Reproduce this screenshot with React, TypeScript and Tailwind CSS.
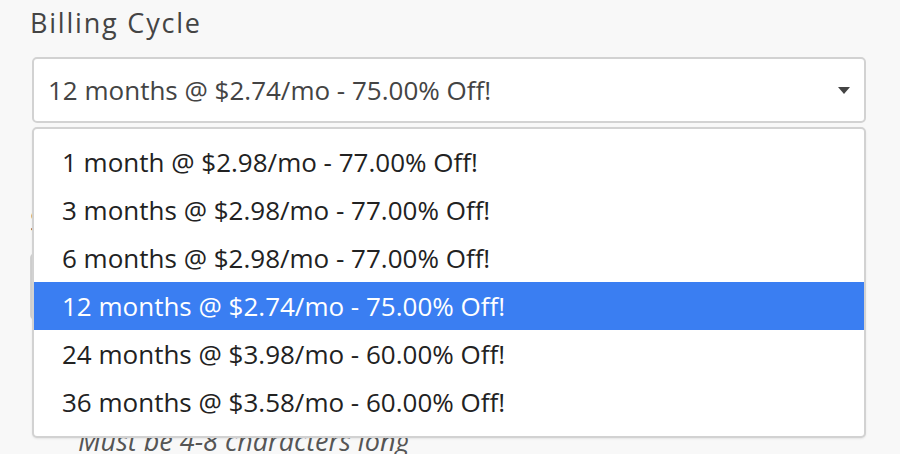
const options = [
  "1 month @ $2.98/mo - 77.00% Off!",
  "3 months @ $2.98/mo - 77.00% Off!",
  "6 months @ $2.98/mo - 77.00% Off!",
  "12 months @ $2.74/mo - 75.00% Off!",
  "24 months @ $3.98/mo - 60.00% Off!",
  "36 months @ $3.58/mo - 60.00% Off!",
];

export default function App() {
  const selected = 3;

  return (
    <div
      className="relative w-full h-[454px] overflow-hidden bg-[#f8f8f8]"
      style={{ fontFamily: "'Open Sans', 'Noto Sans', sans-serif" }}
    >
      {/* form underneath */}
      <div className="pl-[30px] pr-[34px] pt-[7px]">
        <div className="text-[27px] leading-[32px] tracking-[1.8px] text-[#444]">Billing Cycle</div>

        <div className="mt-[18px] ml-[2px] h-[66px] flex items-center justify-between rounded-[5px] border-2 border-[#d2d2d2] bg-white pl-[14px] pr-[14px]">
          <span className="text-[26px] leading-[32px] text-[#444]">12 months @ $2.74/mo - 75.00% Off!</span>
          <svg width="12" height="7" viewBox="0 0 12 7">
            <path d="M0 0h12L6 7z" fill="#444" />
          </svg>
        </div>

        <div className="mt-[82px] text-[27px] leading-[32px] tracking-[1.8px] text-[#444]">Server Hostname</div>
        <div className="mt-[16px] h-[67px] rounded-[5px] border-2 border-[#d2d2d2] bg-white" />
        <div className="mt-[105px] pl-[48px] text-[27px] leading-[32px] italic text-[#555]">
          Must be 4-8 characters long
        </div>
      </div>

      {/* open dropdown list */}
      <div className="absolute left-[32px] top-[127px] w-[834px] rounded-[5px] border-2 border-[#d2d2d2] bg-white pt-[9px] pb-[10px] shadow-[0_1px_2px_rgba(0,0,0,0.08)]">
        {options.map((o, i) => (
          <div
            key={o}
            className={
              i === selected
                ? "h-[48px] flex items-center pl-[28px] text-[26px] bg-[#3a7ef2] text-white"
                : "h-[48px] flex items-center pl-[28px] text-[26px] text-[#222]"
            }
          >
            {o}
          </div>
        ))}
      </div>
    </div>
  );
}
